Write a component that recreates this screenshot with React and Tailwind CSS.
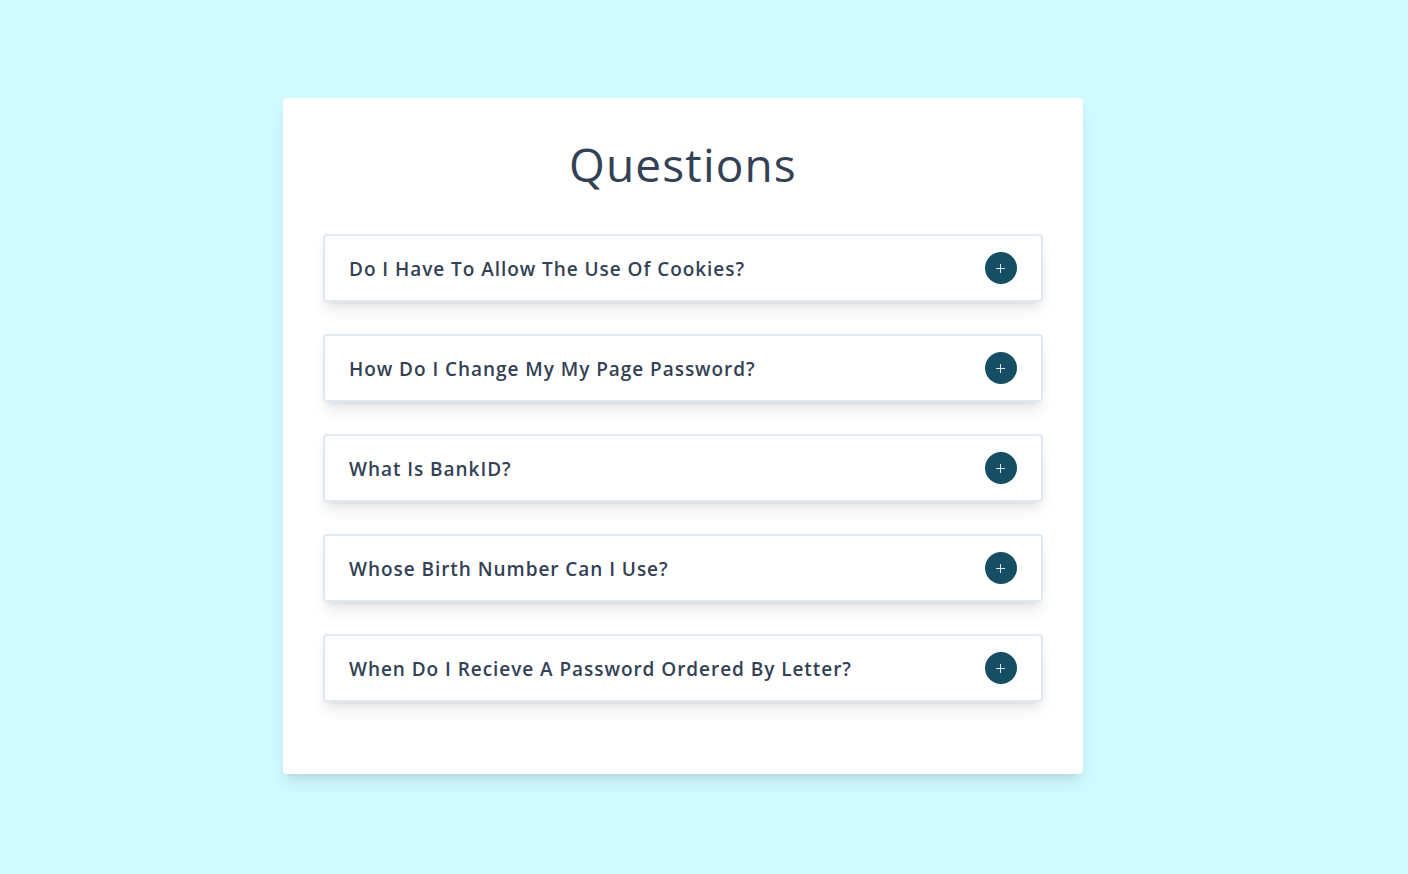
import { useState } from "react";

const questions = [
  {
    title: "Do I Have To Allow The Use Of Cookies?",
    answer: "No. You can decline cookies, but some features may not work as expected.",
  },
  {
    title: "How Do I Change My My Page Password?",
    answer: "Sign in to My Page, open your profile and choose a new password.",
  },
  {
    title: "What Is BankID?",
    answer: "BankID is a personal electronic ID for secure identification and signing.",
  },
  {
    title: "Whose Birth Number Can I Use?",
    answer: "You can only use your own birth number.",
  },
  {
    title: "When Do I Recieve A Password Ordered By Letter?",
    answer: "Letters normally arrive within a few working days.",
  },
];

function Question({ title, answer }) {
  const [open, setOpen] = useState(false);

  return (
    <article className="rounded border-2 border-[#e2e8f0] px-6 py-4 shadow-lg">
      <div className="flex items-center justify-between gap-4">
        <h2 className="pt-0.5 text-[19px] leading-[30px] font-semibold tracking-wider">{title}</h2>
        <button
          type="button"
          aria-label={title}
          aria-expanded={open}
          onClick={() => setOpen(!open)}
          className="flex size-8 shrink-0 items-center justify-center rounded-full bg-[#164e63] text-[#dbe6ea]"
        >
          <svg viewBox="0 0 32 32" className="size-8" stroke="currentColor" strokeWidth="1" aria-hidden="true">
            <path d="M11 16.5H20" />
            {!open && <path d="M15.5 12V21" />}
          </svg>
        </button>
      </div>
      {open && <p className="mt-4">{answer}</p>}
    </article>
  );
}

export default function App() {
  return (
    <main className="min-h-screen bg-[#cffafe] px-4 py-[98px] font-['Open_Sans','Noto_Sans',sans-serif] text-[#334155] lg:pr-[58px]">
      <section className="mx-auto max-w-[800px] rounded bg-white px-10 pt-10 pb-[72px] shadow-lg">
        <h1 className="mb-11 text-center text-[46px] leading-[52px] tracking-wide">Questions</h1>
        <div className="flex flex-col gap-8">
          {questions.map((question) => (
            <Question key={question.title} {...question} />
          ))}
        </div>
      </section>
    </main>
  );
}
